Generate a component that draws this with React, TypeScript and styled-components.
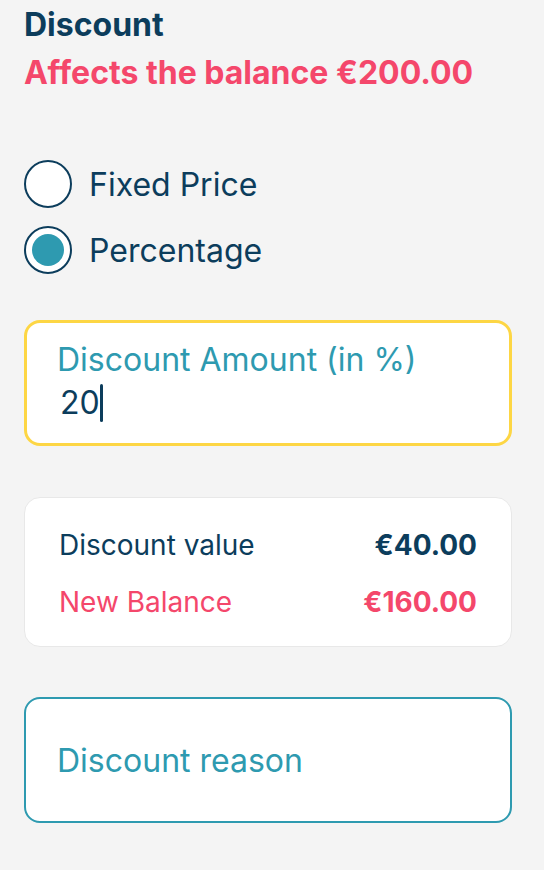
import React from "react"
import styled, { createGlobalStyle } from "styled-components"

const GlobalStyle = createGlobalStyle`
  html, body {
    margin: 0;
    padding: 0;
    background: #f4f4f4;
  }
  body {
    font-family: Inter, "Noto Sans", sans-serif;
    color: #0c3d5c;
  }
`

const Page = styled.div`
  padding: 5px 32px 40px 24px;
  display: flex;
  flex-direction: column;
`

const Title = styled.h1`
  margin: 0;
  font-size: 32px;
  line-height: 40px;
  font-weight: 700;
  color: #0c3d5c;
`

const Subtitle = styled.p`
  margin: 8px 0 0;
  font-size: 32px;
  line-height: 40px;
  font-weight: 700;
  color: #f4476b;
`

const RadioGroup = styled.div`
  margin-top: 67px;
  display: flex;
  flex-direction: column;
  gap: 18px;
`

const RadioRow = styled.label`
  display: flex;
  align-items: center;
  gap: 17px;
  height: 48px;
  font-size: 32px;
  color: #0c3d5c;
`

const RadioCircle = styled.span<{ $checked?: boolean }>`
  box-sizing: border-box;
  width: 48px;
  height: 48px;
  border-radius: 50%;
  border: 2px solid #0c3d5c;
  background: #fff;
  display: flex;
  align-items: center;
  justify-content: center;

  &::after {
    content: "";
    display: ${p => (p.$checked ? "block" : "none")};
    width: 32px;
    height: 32px;
    border-radius: 50%;
    background: #2e9ab0;
  }
`

const Field = styled.div<{ $focused?: boolean }>`
  box-sizing: border-box;
  height: 126px;
  background: #fff;
  border-radius: 16px;
  border: ${p => (p.$focused ? "3px solid #fdd644" : "2px solid #2e9ab0")};
`

const AmountField = styled(Field)`
  margin-top: 46px;
  padding: 17px 20px 0 30px;
`

const FieldLabel = styled.div`
  font-size: 32px;
  line-height: 40px;
  color: #2e9ab0;
`

const FieldValue = styled.div`
  margin-top: 3px;
  padding-left: 3px;
  font-size: 32px;
  line-height: 40px;
  color: #0c3d5c;
  display: flex;
  align-items: center;
`

const Caret = styled.span`
  display: inline-block;
  width: 3px;
  height: 38px;
  border-radius: 2px;
  background: #0c3d5c;
`

const SummaryCard = styled.div`
  margin-top: 51px;
  background: #fff;
  border: 1px solid #e8e8e8;
  border-radius: 16px;
  padding: 30px 34px 27px 34px;
  display: flex;
  flex-direction: column;
  gap: 23px;
`

const SummaryRow = styled.div<{ $danger?: boolean }>`
  display: flex;
  justify-content: space-between;
  font-size: 28px;
  line-height: 34px;
  color: ${p => (p.$danger ? "#f4476b" : "#0c3d5c")};

  strong {
    font-weight: 700;
  }
`

const ReasonField = styled(Field)`
  margin-top: 50px;
  display: flex;
  align-items: center;
  padding: 0 31px 0 31px;
  font-size: 32px;
  color: #2e9ab0;
`

export default function App() {
  return (
    <>
      <GlobalStyle />
      <Page>
        <Title>Discount</Title>
        <Subtitle>Affects the balance €200.00</Subtitle>

        <RadioGroup>
          <RadioRow>
            <RadioCircle />
            Fixed Price
          </RadioRow>
          <RadioRow>
            <RadioCircle $checked />
            Percentage
          </RadioRow>
        </RadioGroup>

        <AmountField $focused>
          <FieldLabel>Discount Amount (in %)</FieldLabel>
          <FieldValue>
            20
            <Caret />
          </FieldValue>
        </AmountField>

        <SummaryCard>
          <SummaryRow>
            <span>Discount value</span>
            <strong>€40.00</strong>
          </SummaryRow>
          <SummaryRow $danger>
            <span>New Balance</span>
            <strong>€160.00</strong>
          </SummaryRow>
        </SummaryCard>

        <ReasonField>Discount reason</ReasonField>
      </Page>
    </>
  )
}
